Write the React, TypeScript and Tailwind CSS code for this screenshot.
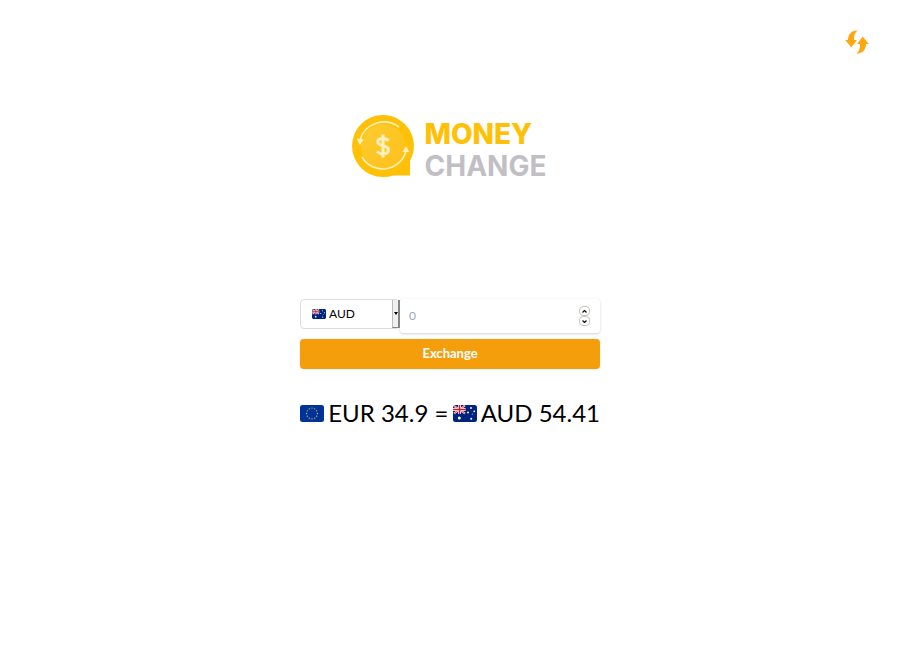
import { useState } from "react";

function EuFlag({ className }: { className?: string }) {
  const stars = Array.from({ length: 12 }, (_, i) => {
    const a = (i * Math.PI) / 6;
    return { x: 12 + 5.4 * Math.sin(a), y: 8.5 - 5.4 * Math.cos(a) };
  });
  return (
    <svg viewBox="0 0 24 17" className={className} role="img" aria-label="EU">
      <rect width="24" height="17" rx="2.5" fill="#039" />
      {stars.map((s, i) => (
        <circle key={i} cx={s.x} cy={s.y} r="0.65" fill="#e8c52e" />
      ))}
    </svg>
  );
}

function AuFlag({ className }: { className?: string }) {
  return (
    <svg viewBox="0 0 24 17" className={className} role="img" aria-label="Australia">
      <rect width="24" height="17" rx="2.5" fill="#00247d" />
      <path d="M1 1 12 8.5M12 0.5 1 8.5" stroke="#fff" strokeWidth="1.8" />
      <path d="M1 1 12 8.5M12 0.5 1 8.5" stroke="#cf1b2b" strokeWidth="0.7" />
      <path d="M6.5 0v9M0 4.5h12.5" stroke="#fff" strokeWidth="3" />
      <path d="M6.5 0v9M0 4.5h12.5" stroke="#cf1b2b" strokeWidth="1.6" />
      <g fill="#fff">
        <circle cx="6.3" cy="13" r="1.5" />
        <circle cx="18" cy="3" r="0.9" />
        <circle cx="15" cy="7.5" r="0.9" />
        <circle cx="21.3" cy="6.3" r="0.9" />
        <circle cx="18.2" cy="13.8" r="1" />
        <circle cx="19.3" cy="9" r="0.5" />
      </g>
    </svg>
  );
}

function Coin() {
  return (
    <svg viewBox="0 0 62 62" className="size-[62px]" aria-hidden="true">
      <defs>
        <linearGradient id="coin" x1="0" y1="0" x2="1" y2="1">
          <stop offset="0" stopColor="#fdcc30" />
          <stop offset="1" stopColor="#fdc01c" />
        </linearGradient>
      </defs>
      <path d="M31 0A31 31 0 1 0 31 62Q37 62 41 60.500H58V46A31 31 0 0 0 31 0Z" fill="#ffc107" />
      <circle cx="31" cy="31" r="22" fill="url(#coin)" />
      <path d="M47 12A25 25 0 0 0 8 25M10 42A24 24 0 0 0 54 36" fill="none" stroke="#fff0c0" strokeWidth="1.600" />
      <path d="M4.500 23.500l7 1-3.500 5.500zM50.500 37l3.500-6 3.500 6z" fill="#fff0c0" />
      <path d="M36.500 25.500Q34 23.500 31 23.500C27 23.500 25.800 25.300 25.800 27C25.800 32 36.500 29.500 36.500 35C36.500 37.200 34.500 38.800 31 38.800Q27.500 38.800 25 36.500M31 19.500v23" fill="none" stroke="#fff0c0" strokeWidth="3" />
    </svg>
  );
}

function SwapIcon() {
  return (
    <svg viewBox="0 0 24 24" className="size-6" fill="currentColor" aria-hidden="true">
      <path d="M12.500 0.500C7 0 3 4 3 10H0.200L6.300 17.500L12 10H9C8.800 6 9.500 3 12.500 0.500Z" />
      <path d="M11.500 23.500C17 24 21 20 21 14H23.800L17.700 6.500L12 14H15C15.200 18 14.500 21 11.500 23.500Z" />
    </svg>
  );
}

export default function App() {
  const [amount, setAmount] = useState("");
  const step = (n: number) => setAmount(String(Math.max(0, Number(amount) + n)));

  return (
    <div className="min-h-screen bg-white font-['Lato','Open_Sans',sans-serif] text-black">
      <header className="flex justify-end px-[31px] pt-[30px]">
        <button type="button" aria-label="Swap currencies" className="text-[#ffa70f]">
          <SwapIcon />
        </button>
      </header>
      <main className="mx-auto flex w-full max-w-[300px] flex-col pt-[61px]">
        <div className="flex items-start justify-center gap-[11px] pr-[2px]">
          <Coin />
          <div className="pt-[3px] font-['Inter',sans-serif] text-[28px] leading-8 text-[#c1bfc5]">
            <div className="font-extrabold text-[#ffc107]">MONEY</div>
            <div className="font-bold">CHANGE</div>
          </div>
        </div>

        <form className="pt-[117px]" onSubmit={(e) => e.preventDefault()}>
          <div className="flex items-start">
            <div className="relative w-[100px]">
              <select
                aria-label="Currency"
                className="block h-[30px] w-full appearance-none rounded border border-[#dcdde2] bg-white pl-[28px] font-['Lato',sans-serif] text-xs"
              >
                <option>AUD</option>
                <option>EUR</option>
              </select>
              <AuFlag className="pointer-events-none absolute top-[10px] left-3 h-[10px] w-[14px]" />
              <span className="pointer-events-none absolute top-[1px] right-0 flex h-7 w-2 items-center justify-center border-r-2 border-b border-l border-r-[#858585] border-b-[#858585] border-l-[#bbb] bg-[#f1f0ef]">
                <svg viewBox="0 0 4 3" className="h-[3px] w-1" aria-hidden="true">
                  <path d="M0 0h4L2 3z" />
                </svg>
              </span>
            </div>
            <div className="flex h-[34px] min-w-0 flex-1 items-center rounded bg-white pr-[10px] pl-[9px] shadow-[0_1px_3px_rgba(0,0,0,0.18)]">
              <input
                type="text"
                inputMode="decimal"
                aria-label="Amount"
                placeholder="0"
                value={amount}
                onChange={(e) => setAmount(e.target.value)}
                className="min-w-0 flex-1 bg-transparent text-xs outline-none placeholder:text-[#a0a8bb]"
              />
              <div className="flex flex-col">
                <button
                  type="button"
                  aria-label="Increase"
                  onClick={() => step(1)}
                  className="flex h-[10px] w-[11px] items-center justify-center rounded-[4px] border border-[#c9c5c1]"
                >
                  <svg viewBox="0 0 5 3" className="h-[3px] w-[5px]" fill="none" stroke="#111" strokeWidth="1.2" aria-hidden="true">
                    <path d="M0.500 2.500l2-2 2 2" />
                  </svg>
                </button>
                <button
                  type="button"
                  aria-label="Decrease"
                  onClick={() => step(-1)}
                  className="flex h-[10px] w-[11px] items-center justify-center rounded-[4px] border border-[#c9c5c1]"
                >
                  <svg viewBox="0 0 5 3" className="h-[3px] w-[5px]" fill="none" stroke="#111" strokeWidth="1.2" aria-hidden="true">
                    <path d="M0.500 0.500l2 2 2-2" />
                  </svg>
                </button>
              </div>
            </div>
          </div>
          <button
            type="submit"
            className="mt-[6px] block h-[30px] w-full rounded bg-[#f59e0b] text-[13px] font-bold text-white shadow-[0_0_2px_rgba(0,0,0,0.15)]"
          >
            Exchange
          </button>
        </form>

        <p className="flex items-center justify-between pt-7 text-2xl leading-8 whitespace-nowrap">
          <EuFlag className="h-[17px] w-6" />
          <span>EUR 34.9 =</span>
          <AuFlag className="h-[17px] w-6" />
          <span>AUD 54.41</span>
        </p>
      </main>
    </div>
  );
}
